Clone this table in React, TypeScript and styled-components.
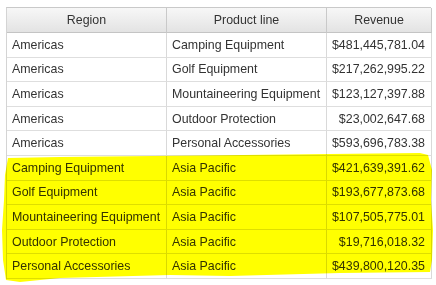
import React from "react";
import styled, { createGlobalStyle } from "styled-components";

const Global = createGlobalStyle`
  html, body { margin: 0; padding: 0; background: #fff; }
  body { font-family: Arial, "Liberation Sans", sans-serif; }
`;

const Page = styled.div`
  position: relative;
  width: 436px;
  height: 285px;
  padding: 7px 0 0 6px;
  box-sizing: border-box;
`;

const Grid = styled.div`
  display: grid;
  grid-template-columns: 160px 160px 105px;
  width: 425px;
  border-top: 1px solid #c9c9c9;
  border-left: 1px solid #d4d4d4;
  box-sizing: border-box;
`;

const HeadCell = styled.div`
  height: 25px;
  box-sizing: border-box;
  display: flex;
  align-items: center;
  justify-content: center;
  background: linear-gradient(#f7f7f7, #e3e3e3);
  border-right: 1px solid #c9c9c9;
  border-bottom: 1px solid #c4c4c4;
  color: #333;
  font-size: 12.4px;
`;

const Cell = styled.div<{ $right?: boolean }>`
  height: 24.6px;
  box-sizing: border-box;
  display: flex;
  align-items: center;
  justify-content: ${(p) => (p.$right ? "flex-end" : "flex-start")};
  padding: 0 ${(p) => (p.$right ? "6px" : "0")} 0 ${(p) => (p.$right ? "0" : "5px")};
  border-right: 1px solid #d9d9d9;
  border-bottom: 1px solid #dedede;
  color: #333;
  font-size: 12.4px;
  white-space: nowrap;
`;

const Marker = styled.svg`
  position: absolute;
  left: 0;
  top: 0;
  width: 436px;
  height: 285px;
  mix-blend-mode: multiply;
  pointer-events: none;
`;

const rows: [string, string, string][] = [
  ["Americas", "Camping Equipment", "$481,445,781.04"],
  ["Americas", "Golf Equipment", "$217,262,995.22"],
  ["Americas", "Mountaineering Equipment", "$123,127,397.88"],
  ["Americas", "Outdoor Protection", "$23,002,647.68"],
  ["Americas", "Personal Accessories", "$593,696,783.38"],
  ["Camping Equipment", "Asia Pacific", "$421,639,391.62"],
  ["Golf Equipment", "Asia Pacific", "$193,677,873.68"],
  ["Mountaineering Equipment", "Asia Pacific", "$107,505,775.01"],
  ["Outdoor Protection", "Asia Pacific", "$19,716,018.32"],
  ["Personal Accessories", "Asia Pacific", "$439,800,120.35"],
];

export default function App() {
  return (
    <>
      <Global />
      <Page>
        <Grid>
          <HeadCell>Region</HeadCell>
          <HeadCell>Product line</HeadCell>
          <HeadCell>Revenue</HeadCell>
          {rows.map((r, i) => (
            <React.Fragment key={i}>
              <Cell>{r[0]}</Cell>
              <Cell>{r[1]}</Cell>
              <Cell $right>{r[2]}</Cell>
            </React.Fragment>
          ))}
        </Grid>
        <Marker viewBox="0 0 436 285">
          <path
            d="M8 158 L60 157 L200 155.5 L330 154 L420 153 L428 155 L432 170 L431 200 L433 230 L432 260 L430 272 L340 273 L230 276 L170 275 L60 278 L20 282 L6 280 L3 260 L2 230 L4 200 L5 175 Z"
            fill="#ffff00"
          />
        </Marker>
      </Page>
    </>
  );
}
